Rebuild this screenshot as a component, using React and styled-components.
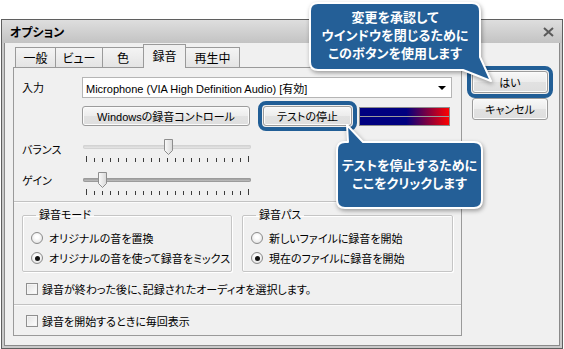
import React from "react";
import styled, { createGlobalStyle, css } from "styled-components";

const GlobalStyle = createGlobalStyle`
  html, body {
    margin: 0;
    padding: 0;
    background: #fff;
  }
  body {
    font-family: "Liberation Sans", "Noto Sans CJK JP", sans-serif;
    font-size: 11px;
    color: #000;
    font-feature-settings: "palt";
  }
`;

const Stage = styled.div`
  position: relative;
  width: 564px;
  height: 349px;
  overflow: hidden;
`;

const Window = styled.div`
  box-sizing: border-box;
  margin: 19px 0 0 1px;
  width: 562px;
  height: 330px;
  border: 1px solid #5f5f5f;
  display: flex;
  flex-direction: column;
  background: #f0f0f0;
`;

const TitleBar = styled.div`
  height: 23px;
  display: flex;
  align-items: center;
  justify-content: space-between;
  padding: 0 8px 0 8px;
  background: linear-gradient(#dedede, #c3c3c3);
  font-weight: bold;
  font-size: 12px;
`;

const Body = styled.div`
  flex: 1;
  display: flex;
  align-items: flex-start;
  padding: 1px 0 0 9px;
  border: 2px solid #c9c9c9;
  border-top: none;
  box-shadow: inset 1px 0 0 #8a8a8a, inset -1px 0 0 #8a8a8a, inset 0 -1px 0 #8a8a8a;
`;

const LeftCol = styled.div`
  width: 449px;
  display: flex;
  flex-direction: column;
`;

const RightCol = styled.div`
  width: 76px;
  margin-left: 10px;
  padding-top: 27px;
  display: flex;
  flex-direction: column;
  gap: 5px;
`;

const TabRow = styled.div`
  height: 23px;
  display: flex;
  align-items: flex-end;
  padding-left: 2px;
`;

const Tab = styled.div`
  box-sizing: border-box;
  width: ${(p) => p.$w}px;
  height: 20px;
  margin-right: -1px;
  border: 1px solid #9a9a9a;
  border-bottom: none;
  background: linear-gradient(#f4f4f4, #e4e4e4);
  display: flex;
  align-items: center;
  justify-content: center;
  font-size: 12px;
  ${(p) =>
    p.$active &&
    css`
      height: 24px;
      margin-bottom: -1px;
      background: #f0f0f0;
      position: relative;
      z-index: 1;
      padding-bottom: 3px;
    `}
`;

const Panel = styled.div`
  box-sizing: border-box;
  height: 269px;
  border: 1px solid #9a9a9a;
  background: #f0f0f0;
  display: flex;
  flex-direction: column;
`;

const Row = styled.div`
  display: flex;
  align-items: ${(p) => p.$align || "center"};
  padding: 0 8px;
  margin-top: ${(p) => p.$mt || 0}px;
`;

const Label = styled.div`
  width: 60px;
  flex-shrink: 0;
  line-height: 14px;
  padding-top: ${(p) => p.$pt || 0}px;
`;

const Select = styled.div`
  box-sizing: border-box;
  width: 370px;
  height: 21px;
  border: 1px solid #b5b5b5;
  background: #fff;
  display: flex;
  align-items: center;
  justify-content: space-between;
  padding: 0 5px 0 3px;
  font-size: 11px;
`;

const Arrow = styled.span`
  width: 0;
  height: 0;
  border-left: 4px solid transparent;
  border-right: 4px solid transparent;
  border-top: 4px solid #000;
`;

const Button = styled.button`
  box-sizing: border-box;
  width: ${(p) => p.$w}px;
  height: ${(p) => p.$h || 20}px;
  padding: 0;
  border: 1px solid #9c9c9c;
  border-radius: 3px;
  background: linear-gradient(#f8f8f8, #ececec 50%, #e2e2e2 50%, #dedede);
  box-shadow: inset 0 0 0 1px #fbfbfb;
  font: inherit;
  font-size: 11px;
  color: #000;
  margin-left: ${(p) => p.$ml || 0}px;
  ${(p) =>
    p.$ring &&
    css`
      outline: 4px solid #215e96;
      outline-offset: 1px;
    `}
`;

const Meter = styled.div`
  box-sizing: border-box;
  width: 91px;
  height: 19px;
  margin-left: 7px;
  border: 1px solid #8c8c8c;
  display: flex;
  flex-direction: column;
  gap: 1px;
  background: #9a9a9a;
`;

const MeterBar = styled.div`
  flex: 1;
  background: linear-gradient(to right, #000080 0%, #000080 52%, #ff0000 100%);
`;

const Slider = styled.div`
  position: relative;
  width: 168px;
  height: 24px;
  margin-left: 1px;
`;

const Track = styled.div`
  position: absolute;
  left: 0;
  right: 0;
  top: 6px;
  height: 4px;
  border-radius: 2px;
  background: ${(p) => (p.$dark ? "linear-gradient(#8c8c8c, #d0d0d0)" : "linear-gradient(#cfcfcf, #ededed)")};
  box-shadow: inset 0 0 0 1px ${(p) => (p.$dark ? "#9b9b9b" : "#d3d3d3")};
`;

const Ticks = styled.div`
  position: absolute;
  left: 3px;
  right: 2px;
  top: 17px;
  height: 6px;
  display: flex;
  justify-content: space-between;
  align-items: flex-end;
`;

const Tick = styled.span`
  width: 1px;
  height: ${(p) => (p.$long ? 6 : 4)}px;
  background: #3c3c3c;
`;

const Thumb = styled.svg`
  position: absolute;
  top: 0;
  width: 11px;
  height: 17px;
`;

const Separator = styled.div`
  height: 1px;
  background: #c2c2c2;
  border-bottom: 1px solid #fbfbfb;
  margin-top: ${(p) => p.$mt || 0}px;
`;

const Groups = styled.div`
  display: flex;
  gap: 10px;
  padding: 0 8px 0 8px;
  margin-top: 5px;
`;

const Group = styled.fieldset`
  box-sizing: border-box;
  width: ${(p) => p.$w}px;
  margin: 0;
  padding: 6px 0 3px 8px;
  border: 1px solid #c5c5c5;
  box-shadow: 1px 1px 0 #fff, inset 1px 1px 0 #fff;
  border-radius: 2px;
`;

const Legend = styled.legend`
  padding: 0 3px;
  margin-left: 5px;
  line-height: 14px;
`;

const Option = styled.div`
  height: 20px;
  display: flex;
  align-items: center;
  gap: 6px;
  white-space: nowrap;
`;

const Radio = styled.span`
  box-sizing: border-box;
  flex-shrink: 0;
  width: 12px;
  height: 12px;
  border-radius: 50%;
  border: 1px solid #8a8a8a;
  background: radial-gradient(circle at 50% 40%, #ffffff 20%, #dcdcdc 100%);
  display: flex;
  align-items: center;
  justify-content: center;
  &::after {
    content: "";
    width: 5px;
    height: 5px;
    border-radius: 50%;
    background: ${(p) => (p.$on ? "#111" : "transparent")};
  }
`;

const CheckRow = styled.div`
  height: 18px;
  display: flex;
  align-items: center;
  gap: 4px;
  padding-left: 12px;
  white-space: nowrap;
  margin-top: ${(p) => p.$mt || 0}px;
`;

const Check = styled.span`
  box-sizing: border-box;
  flex-shrink: 0;
  width: 12px;
  height: 12px;
  border: 1px solid #8f8f8f;
  background: linear-gradient(135deg, #e2e2e2, #ffffff);
  box-shadow: inset 0 0 0 1px #f4f4f4;
`;

const Callout = styled.div`
  position: absolute;
  left: ${(p) => p.$x}px;
  top: ${(p) => p.$y}px;
  width: ${(p) => p.$w}px;
  height: ${(p) => p.$h}px;
`;

const Bubble = styled.svg`
  position: absolute;
  inset: 0;
  filter: drop-shadow(1px 2px 2px rgba(0, 0, 0, 0.35));
`;

const CalloutText = styled.div`
  position: relative;
  margin-left: ${(p) => p.$left}px;
  width: ${(p) => p.$width}px;
  padding-top: ${(p) => p.$top}px;
  text-align: center;
  color: #fff;
  font-weight: bold;
  font-family: "Noto Sans CJK JP", sans-serif;
  font-size: 13px;
  line-height: 18px;
  white-space: nowrap;
`;

function SliderControl({ value, dark }) {
  const ticks = Array.from({ length: 21 }, (_, i) => i);
  const left = 3 + value * 163 - 5;
  return (
    <Slider>
      <Track $dark={dark} />
      <Ticks>
        {ticks.map((i) => (
          <Tick key={i} $long={i === 0 || i === 20} />
        ))}
      </Ticks>
      <Thumb viewBox="0 0 11 17" style={{ left }}>
        <defs>
          <linearGradient id="thumbFill" x1="0" x2="1" y1="0" y2="0">
            <stop offset="0" stopColor="#fafafa" />
            <stop offset="1" stopColor="#d8d8d8" />
          </linearGradient>
        </defs>
        <path d="M1.5 0.5 H9.5 V11.5 L5.5 15.5 L1.5 11.5 Z" fill="url(#thumbFill)" stroke="#8d8d8d" />
      </Thumb>
    </Slider>
  );
}

const App = () => {
  return (
    <Stage>
      <GlobalStyle />
      <Window>
        <TitleBar>
          <span>オプション</span>
          <svg width="11" height="10" viewBox="0 0 11 10">
            <path d="M1 1 L10 9 M10 1 L1 9" stroke="#5a5a5a" strokeWidth="2" />
          </svg>
        </TitleBar>
        <Body>
          <LeftCol>
            <TabRow>
              <Tab $w={41}>一般</Tab>
              <Tab $w={48}>ビュー</Tab>
              <Tab $w={42}>色</Tab>
              <Tab $w={43} $active>
                録音
              </Tab>
              <Tab $w={55}>再生中</Tab>
            </TabRow>
            <Panel>
              <Row $mt={9}>
                <Label>入力</Label>
                <Select>
                  <span>Microphone (VIA High Definition Audio) [有効]</span>
                  <Arrow />
                </Select>
              </Row>
              <Row $mt={8}>
                <Label />
                <Button $w={168}>Windowsの録音コントロール</Button>
                <Button $w={89} $ml={13} $ring>
                  テストの停止
                </Button>
                <Meter>
                  <MeterBar />
                  <MeterBar />
                </Meter>
              </Row>
              <Row $mt={13} $align="flex-start">
                <Label $pt={4}>バランス</Label>
                <SliderControl value={0.5} />
              </Row>
              <Row $mt={9} $align="flex-start">
                <Label $pt={2}>ゲイン</Label>
                <SliderControl value={0.1} dark />
              </Row>
              <Separator $mt={5} />
              <Groups>
                <Group $w={210}>
                  <Legend>録音モード</Legend>
                  <Option>
                    <Radio />
                    オリジナルの音を置換
                  </Option>
                  <Option>
                    <Radio $on />
                    オリジナルの音を使って録音をミックス
                  </Option>
                </Group>
                <Group $w={211}>
                  <Legend>録音パス</Legend>
                  <Option>
                    <Radio />
                    新しいファイルに録音を開始
                  </Option>
                  <Option>
                    <Radio $on />
                    現在のファイルに録音を開始
                  </Option>
                </Group>
              </Groups>
              <CheckRow $mt={8}>
                <Check />
                録音が終わった後に、記録されたオーディオを選択します。
              </CheckRow>
              <Separator $mt={6} />
              <CheckRow $mt={6}>
                <Check />
                録音を開始するときに毎回表示
              </CheckRow>
            </Panel>
          </LeftCol>
          <RightCol>
            <Button $w={76} $h={22} $ring>
              はい
            </Button>
            <Button $w={76} $h={22}>
              キャンセル
            </Button>
          </RightCol>
        </Body>
      </Window>

      <Callout $x={305} $y={0} $w={195} $h={88}>
        <Bubble width="195" height="88" viewBox="0 0 195 88">
          <path
            d="M13 3 H167 Q175 3 175 11 V57 L186 81 L158 70 H13 Q5 70 5 62 V11 Q5 3 13 3 Z"
            fill="#245f97"
            stroke="#fff"
            strokeWidth="2"
            strokeLinejoin="round"
          />
        </Bubble>
        <CalloutText $left={5} $width={170} $top={8}>
          変更を承認して
          <br />
          ウインドウを閉じるために
          <br />
          このボタンを使用します
        </CalloutText>
      </Callout>

      <Callout $x={332} $y={118} $w={158} $h={96}>
        <Bubble width="158" height="96" viewBox="0 0 158 96">
          <path
            d="M13 24 H16 L15 7 L31 24 H142 Q150 24 150 32 V82 Q150 90 142 90 H13 Q5 90 5 82 V32 Q5 24 13 24 Z"
            fill="#245f97"
            stroke="#fff"
            strokeWidth="2"
            strokeLinejoin="round"
          />
        </Bubble>
        <CalloutText $left={5} $width={145} $top={38}>
          テストを停止するために
          <br />
          ここをクリックします
        </CalloutText>
      </Callout>
    </Stage>
  );
};

export default App;
